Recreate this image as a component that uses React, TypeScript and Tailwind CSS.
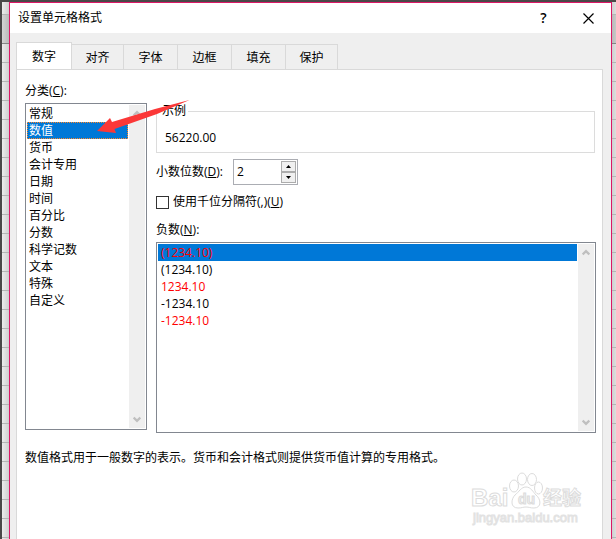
import React, { useState } from "react";
import clsx from "clsx";

const tabs = [
  { name: "数字", width: "w-14" },
  { name: "对齐", width: "w-[52px]" },
  { name: "字体", width: "w-[54px]" },
  { name: "边框", width: "w-[54px]" },
  { name: "填充", width: "w-[54px]" },
  { name: "保护", width: "w-[52px]" },
];

const categories = [
  "常规",
  "数值",
  "货币",
  "会计专用",
  "日期",
  "时间",
  "百分比",
  "分数",
  "科学记数",
  "文本",
  "特殊",
  "自定义",
];

const negatives = [
  { text: "(1234.10)", red: true },
  { text: "(1234.10)", red: false },
  { text: "1234.10", red: true },
  { text: "-1234.10", red: false },
  { text: "-1234.10", red: true },
];

// Slice of the worksheet that shows on either side of the dialog
function SheetEdge({ className }: { className: string }) {
  return (
    <div className={clsx("shrink-0", className)} aria-hidden="true">
      <div className="h-[13px] border-b border-[#b5b5b5]"></div>
      <div className="h-[29px] border-b border-[#858585] bg-black/10"></div>
      {Array.from({ length: 26 }, (_, i) => (
        <div key={i} className="h-[19px] border-b border-[#b5b5b5]"></div>
      ))}
    </div>
  );
}

function ScrollBar() {
  return (
    <div className="flex w-4 shrink-0 flex-col justify-between bg-[#efefef]">
      <button
        type="button"
        aria-label="向上滚动"
        className="flex h-[17px] items-center justify-center"
      >
        <svg width="8" height="7" viewBox="0 0 8 7" fill="none">
          <path d="M.7 5.4 4 2.1l3.3 3.3" stroke="#bfbfbf" strokeWidth="2.2" />
        </svg>
      </button>
      <button
        type="button"
        aria-label="向下滚动"
        className="flex h-[17px] items-center justify-center"
      >
        <svg width="8" height="7" viewBox="0 0 8 7" fill="none">
          <path d="M.7 1.6 4 4.9l3.3-3.3" stroke="#bfbfbf" strokeWidth="2.2" />
        </svg>
      </button>
    </div>
  );
}

function Arrow() {
  return (
    <svg
      className="pointer-events-none absolute top-[30px] left-20"
      width="94"
      height="36"
      viewBox="0 0 94 36"
      aria-hidden="true"
    >
      <path d="M0 31 13 18l2 4L58 9 92.500 0 60 14 17.500 29l1.500 4z" fill="#fb3838" />
    </svg>
  );
}

function Watermark() {
  return (
    <svg
      className="pointer-events-none absolute top-[401px] right-[18px]"
      width="114"
      height="56"
      viewBox="0 0 114 56"
      fill="#fff"
      stroke="#dcdcdc"
      strokeWidth="1"
      fontFamily="'Liberation Sans', 'Noto Sans CJK SC', sans-serif"
    >
      <text x="1" y="35" fontSize="24" fontWeight="700">
        Bai
      </text>
      <ellipse cx="52" cy="8" rx="4.500" ry="6" />
      <ellipse cx="62" cy="8.500" rx="4.500" ry="6" />
      <ellipse cx="44" cy="15" rx="4.500" ry="6" />
      <ellipse cx="68.500" cy="17" rx="4" ry="6" />
      <path d="M56 16c5 0 7 5 10 8 5 4 6 13-2 13-4 0-5-1-8-1s-4 1-8 1c-8 0-7-9-3-13 4-3 6-8 11-8z" />
      <text x="48" y="33" fontSize="14" fontWeight="700" fill="#f1f1f1">
        du
      </text>
      <text x="73" y="34" fontSize="19" fontWeight="700">
        经验
      </text>
      <text x="3" y="51" fontSize="13" stroke="#e2e2e2">
        jingyan.baidu.com
      </text>
    </svg>
  );
}

export default function App() {
  const [tab, setTab] = useState("数字");
  const [category, setCategory] = useState("数值");
  const [negative, setNegative] = useState(0);
  const [places, setPlaces] = useState(2);
  const [separator, setSeparator] = useState(false);

  return (
    <div className="flex min-h-screen border-t-2 border-l-2 border-[#4a4848] bg-white font-['Open_Sans','Noto_Sans_CJK_SC',sans-serif] text-xs leading-[18px] text-black">
      <SheetEdge className="w-[7px] bg-linear-to-r from-[#ededed] to-[#cfcfcf]" />

      <div
        role="dialog"
        aria-labelledby="dialog-title"
        className="flex min-w-0 flex-1 flex-col border-x border-t border-[#dc1766] bg-[#efefef]"
      >
        <header className="flex h-[30px] items-center bg-white pl-2">
          <h1 id="dialog-title" className="flex-1">
            设置单元格格式
          </h1>
          <button
            type="button"
            aria-label="帮助"
            className="h-full w-[45px] text-sm font-semibold"
          >
            ?
          </button>
          <button
            type="button"
            aria-label="关闭"
            className="flex h-full w-[45px] items-center justify-center"
          >
            <svg width="11" height="11" viewBox="0 0 11 11">
              <path d="M.5.5l10 10M10.500.5l-10 10" stroke="#000" strokeWidth="1.200" />
            </svg>
          </button>
        </header>

        <div className="flex flex-1 flex-col pt-[9px] pr-2 pl-1.5">
          <div role="tablist" className="relative -mb-px flex items-end">
            {tabs.map(({ name, width }) => (
              <button
                key={name}
                type="button"
                role="tab"
                aria-selected={tab === name}
                onClick={() => setTab(name)}
                className={clsx(
                  "border-[#d9d9d9]",
                  width,
                  tab === name
                    ? "h-7 border-x border-t bg-white"
                    : "h-[26px] border-y border-r pt-px"
                )}
              >
                {name}
              </button>
            ))}
          </div>

          <main className="relative flex-1 border-x border-t border-[#d9d9d9] bg-white pt-3 pr-1.5 pl-2">
            <div className="flex gap-[9px]">
              <section className="w-[122px] shrink-0">
                <h2 id="category-label" className="mb-[3px]">
                  分类(<span className="underline">C</span>):
                </h2>
                <div className="flex h-[327px] border border-[#828790] p-px">
                  <div
                    role="listbox"
                    aria-labelledby="category-label"
                    className="mr-px flex-1"
                  >
                    {categories.map((name) => (
                      <button
                        key={name}
                        type="button"
                        role="option"
                        aria-selected={category === name}
                        onClick={() => setCategory(name)}
                        className={clsx(
                          "block h-[17px] w-full border px-px text-left leading-[15px]",
                          category === name
                            ? "border-dotted border-[#ff8728] bg-[#0078d7] text-white"
                            : "border-transparent"
                        )}
                      >
                        {name}
                      </button>
                    ))}
                  </div>
                  <ScrollBar />
                </div>
              </section>

              <section className="min-w-0 flex-1 pt-5">
                <fieldset className="mr-px border border-[#dcdcdc] pr-2 pb-[5px] pl-[3px]">
                  <legend className="px-0.5">示例</legend>
                  <p className="pt-[9px] pl-[5px]">56220.00</p>
                </fieldset>

                <div className="mt-1.5 flex items-center gap-2.5">
                  <label htmlFor="places">
                    小数位数(<span className="underline">D</span>):
                  </label>
                  <div className="flex h-[26px] w-[65px] border border-[#abadb3] p-px">
                    <input
                      id="places"
                      type="text"
                      value={places}
                      onChange={(e) => setPlaces(Number(e.target.value) || 0)}
                      className="h-5 min-w-0 flex-1 pl-0.5 outline-none"
                    />
                    <div className="flex w-[15px] flex-col">
                      <button
                        type="button"
                        aria-label="增加"
                        onClick={() => setPlaces(places + 1)}
                        className="flex flex-1 items-center justify-center border border-[#acacac] bg-[#f0f0f0]"
                      >
                        <svg width="5" height="3" viewBox="0 0 5 3">
                          <path d="M0 3 2.500 0 5 3z" />
                        </svg>
                      </button>
                      <button
                        type="button"
                        aria-label="减少"
                        onClick={() => setPlaces(Math.max(0, places - 1))}
                        className="flex flex-1 items-center justify-center border border-[#acacac] bg-[#f0f0f0]"
                      >
                        <svg width="5" height="3" viewBox="0 0 5 3">
                          <path d="M0 0 2.500 3 5 0z" />
                        </svg>
                      </button>
                    </div>
                  </div>
                </div>

                <div className="mt-2 flex items-center gap-1">
                  <input
                    id="separator"
                    type="checkbox"
                    checked={separator}
                    onChange={(e) => setSeparator(e.target.checked)}
                    className="size-[13px] appearance-none border border-[#333] bg-white checked:bg-[#0078d7]"
                  />
                  <label htmlFor="separator">
                    使用千位分隔符(,)(<span className="underline">U</span>)
                  </label>
                </div>

                <h2 id="negative-label" className="mt-2.5 mb-[3px]">
                  负数(<span className="underline">N</span>):
                </h2>
                <div className="flex h-[191px] border border-[#828790] p-px">
                  <div
                    role="listbox"
                    aria-labelledby="negative-label"
                    className="mr-px flex-1"
                  >
                    {negatives.map(({ text, red }, i) => (
                      <button
                        key={i}
                        type="button"
                        role="option"
                        aria-selected={negative === i}
                        onClick={() => setNegative(i)}
                        className={clsx(
                          "block h-[17px] w-full px-[3px] text-left leading-[17px]",
                          negative === i && "bg-[#0078d7]",
                          red ? "text-[#ff0000]" : "text-black"
                        )}
                      >
                        {text}
                      </button>
                    ))}
                  </div>
                  <ScrollBar />
                </div>
              </section>
            </div>

            <p className="mt-4">
              数值格式用于一般数字的表示。货币和会计格式则提供货币值计算的专用格式。
            </p>

            <Arrow />
            <Watermark />
          </main>
        </div>
      </div>

      <SheetEdge className="w-1 bg-linear-to-r from-[#cfcfcf] to-[#dedede]" />
    </div>
  );
}
